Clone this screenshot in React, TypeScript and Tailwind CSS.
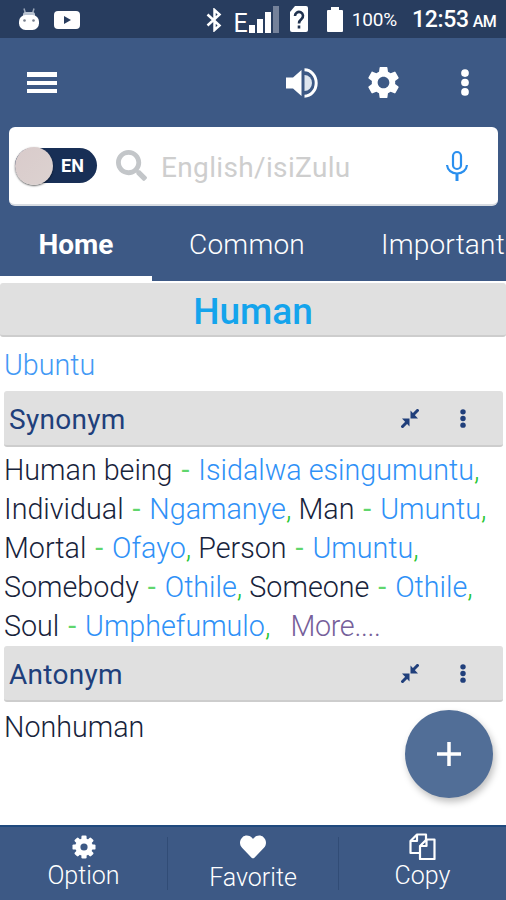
import type { ReactNode } from "react";
import { MdSettings } from "react-icons/md";
import { FaHeart, FaSearch } from "react-icons/fa";

type Meaning = { word: string; zulu: string };

const synonymLines: Meaning[][] = [
  [{ word: "Human being", zulu: "Isidalwa esingumuntu" }],
  [
    { word: "Individual", zulu: "Ngamanye" },
    { word: "Man", zulu: "Umuntu" },
  ],
  [
    { word: "Mortal", zulu: "Ofayo" },
    { word: "Person", zulu: "Umuntu" },
  ],
  [
    { word: "Somebody", zulu: "Othile" },
    { word: "Someone", zulu: "Othile" },
  ],
  [{ word: "Soul", zulu: "Umphefumulo" }],
];

const gearTeeth = [0, 45, 90, 135];

const Dots = ({ className }: { className: string }) => (
  <svg viewBox="0 0 8 28" className={className} fill="currentColor">
    <circle cx="4" cy="4.2" r="4" />
    <circle cx="4" cy="14" r="4" />
    <circle cx="4" cy="23.8" r="4" />
  </svg>
);

const AndroidHead = () => (
  <svg viewBox="0 0 20 24" className="h-6 w-5">
    <path d="M5 1.500l1.500 5M15 1.500l-1.500 5" stroke="#9aa6b8" strokeWidth="1.500" />
    <path d="M4 11V7.500a2.500 2.500 0 0 1 2.500-2.500h7a2.500 2.500 0 0 1 2.500 2.500V11z" fill="#b9c3d1" />
    <rect y="8" width="20" height="15" rx="6.500" fill="white" />
    <circle cx="5.500" cy="13.500" r="1.300" fill="#777f8c" />
    <circle cx="14.500" cy="13.500" r="1.300" fill="#777f8c" />
  </svg>
);

const YoutubeBadge = () => (
  <svg viewBox="0 0 26 18" className="ml-[15px] mt-[2px] h-[18px] w-[26px]">
    <rect width="26" height="18" rx="4" fill="white" />
    <path d="M10 5l7 4-7 4z" fill="#283d5f" />
  </svg>
);

const Bluetooth = () => (
  <svg viewBox="0 0 16 24" className="mt-[2px] h-6 w-4" fill="none" stroke="white" strokeWidth="2.500">
    <path d="M1.500 6.500l12 11L8.500 22V2l5 4.500-12 11" />
  </svg>
);

const Signal = () => (
  <svg viewBox="0 0 32 27" className="h-[27px] w-8" fill="white">
    <path d="M1 19h6v8H1zM9 13h6v14H9zM17 6h6v21h-6z" />
    <path d="M25 0h6v27h-6z" fill="#75829a" />
  </svg>
);

const SimUnknown = () => (
  <svg viewBox="0 0 18 26" className="ml-[10px] h-[26px] w-[18px]">
    <path d="M5 0h11a2 2 0 0 1 2 2v22a2 2 0 0 1-2 2H2a2 2 0 0 1-2-2V6z" fill="white" />
    <path
      d="M5 10a4 4 0 1 1 6.500 3C9.600 14.500 9 15.200 9 17.500M9 19.500v3"
      fill="none"
      stroke="#20324f"
      strokeWidth="2.600"
    />
  </svg>
);

const Battery = () => (
  <svg viewBox="0 0 16 25" className="ml-[19px] h-[25px] w-4" fill="white">
    <path d="M4 0h8v3h3a1 1 0 0 1 1 1v20a1 1 0 0 1-1 1H1a1 1 0 0 1-1-1V4a1 1 0 0 1 1-1h3z" />
  </svg>
);

const Speaker = () => (
  <svg viewBox="0 0 32 30" className="h-[30px] w-8">
    <path d="M0 9.500h7L15.500 2v26L7 20.500H0z" fill="white" />
    <path d="M18.500 7a7.500 8 0 0 1 0 16z" fill="#dfe6ef" />
    <path d="M18.500 1.800a11.700 13.200 0 0 1 0 26.400" fill="none" stroke="white" strokeWidth="3" />
  </svg>
);

const Mic = () => (
  <svg viewBox="0 0 24 32" className="h-8 w-6" fill="none" stroke="#2a8fee" strokeWidth="2.200">
    <rect x="8" y="2" width="8" height="17" rx="4" />
    <path d="M2 15c.500 5 4.500 8.500 10 8.500S21.500 20 22 15" />
    <path d="M12 24v7" strokeWidth="3" />
  </svg>
);

const CollapseIcon = () => (
  <svg viewBox="0 0 18 19" className="h-[19px] w-[18px]" fill="none" stroke="#203f7b" strokeWidth="3">
    <path d="M17.500 .5l-6 6M.5 18.500l6-6" />
    <path d="M9.500 1.500v8H17zM8.500 17.500v-8H1z" fill="#203f7b" stroke="none" />
  </svg>
);

const OptionGear = () => (
  <svg viewBox="-12 -12 24 24" className="h-6 w-6">
    {gearTeeth.map((angle) => (
      <rect key={angle} x="-2.600" y="-11.500" width="5.200" height="23" rx="1.200" fill="white" transform={`rotate(${angle})`} />
    ))}
    <circle r="8.700" fill="white" />
    <circle r="3.600" fill="#3d5985" />
  </svg>
);

const CopyIcon = () => (
  <svg viewBox="0 0 27 27" className="h-[27px] w-[27px]" fill="none" stroke="white" strokeWidth="2.200" strokeLinejoin="round">
    <path d="M11 20H1.500V8l6.500-6.500h9V7M8 1.500V8H1.500" />
    <path d="M11 13l6.500-6.500H25.500V26H11zM17.500 6.500V13H11" />
  </svg>
);

const SectionHeader = ({ title }: { title: string }) => (
  <div className="ml-1 mr-[3px] flex h-14 items-center rounded-[3px] border-b-2 border-[#cdcdcd] bg-[#e0e0e0] pl-[5px] pr-[37px] text-[#203f7b]">
    <h2 className="flex-1 pt-[3px] text-[28px] font-normal leading-none tracking-[0.3px]">{title}</h2>
    <CollapseIcon />
    <Dots className="ml-[41px] h-[19px] w-[6px]" />
  </div>
);

const NavItem = ({ icon, label, className }: { icon: ReactNode; label: string; className: string }) => (
  <button className={`flex flex-col items-center text-[25px] font-light text-white ${className}`}>
    <span className="flex h-[27px] items-center">{icon}</span>
    {label}
  </button>
);

const App = () => {
  return (
    <div className="relative flex h-[900px] w-[506px] flex-col overflow-hidden bg-white font-['Roboto',sans-serif]">
      <div className="flex h-[38px] shrink-0 items-center bg-[#283d5f] pl-[19px] pr-[10px] text-white">
        <AndroidHead />
        <YoutubeBadge />
        <span className="flex-1" />
        <Bluetooth />
        <span className="ml-[12px] mt-[9px] text-[25px] leading-none">E</span>
        <Signal />
        <SimUnknown />
        <Battery />
        <span className="ml-[9px] mt-[2px] text-[19px] tracking-[-0.2px]">100%</span>
        <span className="ml-[15px] mt-[2px] text-[23px] font-medium tracking-[-0.3px]">12:53</span>
        <span className="ml-1 mt-[5px] text-[16px] font-medium tracking-[-0.7px]">AM</span>
      </div>

      <header className="shrink-0 bg-[#3d5985] text-white">
        <div className="flex h-[89px] items-center pl-[27px] pr-[37px]">
          <div className="flex flex-1 flex-col gap-[4px]">
            <span className="h-[5px] w-[30px] bg-white" />
            <span className="h-[4px] w-[30px] bg-white" />
            <span className="h-[4px] w-[30px] bg-white" />
          </div>
          <Speaker />
          <MdSettings className="ml-[46px] h-[39px] w-[39px]" />
          <Dots className="ml-[58px] h-[27px] w-2" />
        </div>

        <div className="ml-[9px] mr-[8px] flex h-[79px] items-center rounded-[6px] border-b-2 border-[#d8dce2] bg-white pl-[6px] pr-[29px]">
          <div className="flex h-[35px] w-[82px] items-center rounded-full bg-[#182f56]">
            <span className="h-[38px] w-[38px] rounded-full bg-linear-to-br from-[#d9cbcb] to-[#dcd2d0] shadow-[0_1px_2px_rgba(0,0,0,0.6)]" />
            <span className="ml-[8px] text-[18px] font-bold">EN</span>
          </div>
          <FaSearch className="ml-[19px] h-[31px] w-[31px] text-[#c3c6c9]" />
          <span className="ml-[14px] flex-1 pt-[4px] text-[28px] tracking-[0.35px] text-[#cecece]">English/isiZulu</span>
          <Mic />
        </div>

        <nav className="flex h-[75px] overflow-hidden whitespace-nowrap text-[28px] leading-[78px]">
          <span className="w-[152px] shrink-0 border-b-[5px] border-white text-center font-bold">Home</span>
          <span className="w-[190px] shrink-0 text-center font-light tracking-[0.2px]">Common</span>
          <span className="w-[205px] shrink-0 pl-[39px] font-light tracking-[0.2px]">Important</span>
        </nav>
      </header>

      <main className="flex-1 pt-[2px] text-[28.7px] font-light text-[#17233b]">
        <h1 className="h-[54px] rounded-[3px] border-b-2 border-[#cdcdcd] bg-[#e0e0e0] text-center text-[37px] font-medium leading-[58px] text-[#14a4ec]">
          Human
        </h1>
        <p className="h-[54px] pl-1 leading-[56px] text-[#4299f5]">Ubuntu</p>
        <SectionHeader title="Synonym" />
        <div className="h-[199px] pl-1 pt-[4px]">
          {synonymLines.map((line, i) => (
            <p key={i} className="h-[39px] whitespace-pre leading-[39px]">
              {line.map(({ word, zulu }, j) => (
                <span key={word}>
                  {j > 0 && " "}
                  {word}
                  <span className="mx-[1.8px] font-normal text-[#60d66d]"> - </span>
                  <span className="text-[#2f91f7]">{zulu}</span>
                  <span className="text-[#25c631]">,</span>
                </span>
              ))}
              {i === synonymLines.length - 1 && <span className="tracking-[-0.3px] text-[#76609a]">{"   More...."}</span>}
            </p>
          ))}
        </div>
        <SectionHeader title="Antonym" />
        <p className="pl-1 leading-[50px]">Nonhuman</p>
      </main>

      <button className="absolute bottom-[102px] right-[13px] flex h-[88px] w-[88px] items-center justify-center rounded-full bg-[#516e97] shadow-[2px_4px_7px_rgba(0,0,0,0.25)]">
        <svg viewBox="0 0 24 24" className="h-6 w-6" stroke="white" strokeWidth="3.500">
          <path d="M12 0v24M0 12h24" />
        </svg>
      </button>

      <footer className="flex h-[75px] shrink-0 border-t-2 border-[#204a7e] bg-[#3d5985] pt-[6px]">
        <NavItem icon={<OptionGear />} label="Option" className="w-[167px] leading-[32px]" />
        <span className="mt-1 h-[53px] w-px bg-[#314c76]" />
        <NavItem icon={<FaHeart className="h-[26px] w-[26px]" />} label="Favorite" className="w-[170px] leading-[35px]" />
        <span className="mt-1 h-[53px] w-px bg-[#314c76]" />
        <NavItem icon={<CopyIcon />} label="Copy" className="w-[167px] leading-[32px]" />
      </footer>
    </div>
  );
};

export default App;
